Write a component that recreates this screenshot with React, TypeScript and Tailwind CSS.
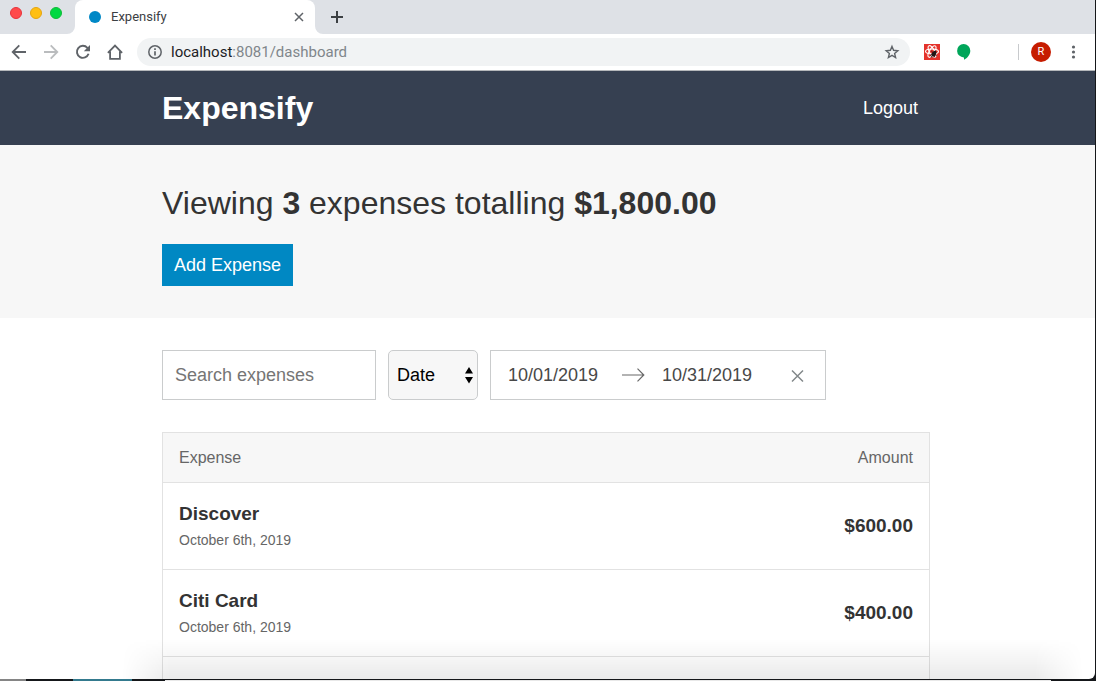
import React from "react";

const iconButton = "flex shrink-0 items-center justify-center text-[#5f6368]";

function TabStrip() {
  return (
    <div className="flex h-[34px] shrink-0 bg-[#dee1e6]">
      <div className="flex w-[75px] shrink-0 items-start gap-2 pl-[10px] pt-[7px]">
        <button aria-label="Close window" className="size-3 rounded-full border border-[#e8323a] bg-[#ff4a4b]" />
        <button aria-label="Minimize window" className="size-3 rounded-full border border-[#e5a50f] bg-[#ffbf12]" />
        <button aria-label="Zoom window" className="size-3 rounded-full border border-[#10bb38] bg-[#00d941]" />
      </div>
      <div className="relative flex w-60 shrink-0 items-center rounded-t-lg bg-white pl-[14px] pr-[10px]">
        <svg className="absolute -left-2 bottom-0" width="8" height="8" aria-hidden="true">
          <path d="M8 0V8H0A8 8 0 0 0 8 0Z" fill="#fff" />
        </svg>
        <svg className="absolute -right-2 bottom-0" width="8" height="8" aria-hidden="true">
          <path d="M0 0V8H8A8 8 0 0 1 0 0Z" fill="#fff" />
        </svg>
        <span className="size-3 rounded-full bg-[#0088c6]" />
        <span className="ml-[10px] flex-1 text-[13px] text-[#3c4043]">Expensify</span>
        <button aria-label="Close tab" className={iconButton}>
          <svg width="12" height="12" viewBox="0 0 12 12" stroke="currentColor" strokeWidth="1.5">
            <path d="M2 2l8 8M10 2l-8 8" />
          </svg>
        </button>
      </div>
      <button aria-label="New tab" className="ml-4 flex items-center text-[#3c4043]">
        <svg width="12" height="12" viewBox="0 0 12 12" stroke="currentColor" strokeWidth="2">
          <path d="M6 0v12M0 6h12" />
        </svg>
      </button>
    </div>
  );
}

function Toolbar() {
  return (
    <div className="flex h-[37px] shrink-0 items-center border-b border-[#b5b8bb] bg-white">
      <div className="flex w-[137px] shrink-0 items-center gap-4 pl-[11px]">
        <button aria-label="Back" className={iconButton}>
          <svg width="16" height="16" viewBox="0 0 16 16" fill="none" stroke="currentColor" strokeWidth="1.8">
            <path d="M15 8H2M8.3 1.4L1.7 8l6.6 6.6" />
          </svg>
        </button>
        <button aria-label="Forward" className="flex shrink-0 text-[#babcbe]">
          <svg width="16" height="16" viewBox="0 0 16 16" fill="none" stroke="currentColor" strokeWidth="1.8">
            <path d="M1 8h13M7.7 1.4L14.3 8l-6.6 6.6" />
          </svg>
        </button>
        <button aria-label="Reload" className={iconButton}>
          <svg width="16" height="16" viewBox="0 0 16 16" fill="none" stroke="currentColor" strokeWidth="1.9">
            <path d="M13.6 9.8A6 6 0 1 1 12.4 3.8L13.6 5" />
            <path d="M15 1v6.2H8.8z" fill="currentColor" stroke="none" />
          </svg>
        </button>
        <button aria-label="Home" className={iconButton}>
          <svg width="16" height="16" viewBox="0 0 16 16" fill="none" stroke="currentColor" strokeWidth="1.8">
            <path d="M.9 8.8L8 1.5l7.1 7.3M3.1 7.5v7.3h9.8V7.5" />
          </svg>
        </button>
      </div>
      <div className="flex h-7 min-w-0 flex-1 items-center rounded-full bg-[#f1f3f4] pl-[10px] pr-[10px]">
        <svg className="shrink-0" width="16" height="16" viewBox="0 0 16 16" fill="none" stroke="#5f6368" strokeWidth="1.5" aria-hidden="true">
          <circle cx="8" cy="8" r="6.2" />
          <path d="M8 7.2v4.2M8 4.3v1.6" strokeWidth="1.7" />
        </svg>
        <div className="ml-2 flex-1 text-[15px] leading-5 text-[#80868b]">
          <span className="text-[#202124]">localhost</span>:8081/dashboard
        </div>
        <button aria-label="Bookmark this page" className={iconButton}>
          <svg width="16" height="16" viewBox="0 0 16 16" fill="none" stroke="currentColor" strokeWidth="1.4">
            <path d="M8 2.4l1.6 3.9 4.2.4-3.200 2.700 1 4.100L8 11.300l-3.600 2.200 1-4.100-3.200-2.700 4.200-.4z" />
          </svg>
        </button>
      </div>
      <div className="flex shrink-0 items-center pl-[14px] pr-[14px]">
        <button aria-label="React developer tools">
          <svg className="block" width="16" height="16" viewBox="0 0 16 16">
            <path d="M0 0h16v16H0z" fill="#e4322b" />
            <g fill="none" stroke="#fff" strokeWidth="1.1">
              <ellipse cx="8" cy="7.5" rx="6.5" ry="2.5" />
              <ellipse cx="8" cy="7.5" rx="6.5" ry="2.5" transform="rotate(60 8 7.5)" />
              <ellipse cx="8" cy="7.5" rx="6.5" ry="2.5" transform="rotate(120 8 7.5)" />
            </g>
            <ellipse cx="10" cy="9.6" rx="1.9" ry="3.2" fill="#1d1515" transform="rotate(35 10 9.6)" />
            <path d="M7.300 7l5.500 5M6 11.500l6-5M7 13.500l2-3M10 13.500l1-3" stroke="#1d1515" strokeWidth="0.9" />
          </svg>
        </button>
        <button aria-label="Hangouts" className="ml-4">
          <svg className="block" width="16" height="16" viewBox="0 0 16 16">
            <path d="M7.600 0A6.700 6.700 0 0 1 14.300 6.700c0 3.900-2.900 7.300-6.300 9.100v-2.400A6.700 6.700 0 1 1 7.600 0Z" fill="#00a65a" />
          </svg>
        </button>
        <span className="ml-[46px] h-4 w-px bg-[#c8cacd]" />
        <button aria-label="Profile" className="ml-3 flex size-5 items-center justify-center rounded-full bg-[#c61c00] text-[11px] text-white">
          R
        </button>
        <button aria-label="Browser menu" className="ml-[14px] text-[#5f6368]">
          <svg className="block" width="16" height="16" viewBox="0 0 16 16" fill="currentColor">
            <circle cx="8.500" cy="3" r="1.6" />
            <circle cx="8.500" cy="8" r="1.6" />
            <circle cx="8.500" cy="13" r="1.6" />
          </svg>
        </button>
      </div>
    </div>
  );
}

const container = "mx-auto w-full max-w-[768px]";

const expenses = [
  { name: "Discover", date: "October 6th, 2019", amount: "$600.00" },
  { name: "Citi Card", date: "October 6th, 2019", amount: "$400.00" },
];

function Filters() {
  return (
    <div className="flex h-[50px] gap-3">
      <input
        type="text"
        aria-label="Search expenses"
        placeholder="Search expenses"
        className="w-[214px] border border-[#cacccd] bg-white px-3 text-lg text-[#333] outline-none placeholder:text-[#757575]"
      />
      <div className="relative">
        <select
          aria-label="Sort by"
          className="h-full w-[90px] appearance-none rounded-[5px] border border-[#cacccd] bg-[#f7f7f7] pl-2 text-lg text-black"
        >
          <option>Date</option>
          <option>Amount</option>
        </select>
        <svg className="pointer-events-none absolute right-1 top-[17px]" width="10" height="17" viewBox="0 0 10 17" aria-hidden="true">
          <path d="M5 0l4 6.5H1zM5 16.5L1 10h8z" />
        </svg>
      </div>
      <div className="flex w-[336px] items-center border border-[#cacccd] bg-white pl-[17px] pr-5 text-lg text-[#484848]">
        <input aria-label="Start date" defaultValue="10/01/2019" className="w-[114px] outline-none" />
        <svg className="shrink-0" width="24" height="16" viewBox="0 0 24 16" fill="none" stroke="#686868" strokeWidth="1.2" aria-hidden="true">
          <path d="M0 8h22M15.500 1.700L21.800 8l-6.300 6.300" />
        </svg>
        <input aria-label="End date" defaultValue="10/31/2019" className="ml-4 min-w-0 flex-1 outline-none" />
        <button aria-label="Clear dates" className="text-[#82888a]">
          <svg className="block" width="16" height="16" viewBox="0 0 16 16" stroke="currentColor" strokeWidth="1.5">
            <path d="M3 3.500l11 11M14 3.500l-11 11" />
          </svg>
        </button>
      </div>
    </div>
  );
}

function ExpenseTable() {
  return (
    <table className="mt-8 w-full border-collapse border border-[#e2e2e2] text-[#333]">
      <thead>
        <tr className="h-[50px] border-b border-[#e2e2e2] bg-[#f7f7f7] text-base text-[#666]">
          <th className="px-4 text-left font-normal">Expense</th>
          <th className="px-4 text-right font-normal">Amount</th>
        </tr>
      </thead>
      <tbody>
        {expenses.map((e) => (
          <tr key={e.name} className="h-[87px] border-b border-[#e2e2e2]">
            <td className="px-4">
              <h3 className="text-[19px] font-bold leading-7">{e.name}</h3>
              <span className="block text-sm leading-6 text-[#666]">{e.date}</span>
            </td>
            <td className="px-4 text-right text-[19px] font-bold">{e.amount}</td>
          </tr>
        ))}
        <tr className="h-[87px]">
          <td />
          <td />
        </tr>
      </tbody>
    </table>
  );
}

export default function App() {
  return (
    <div className="flex h-screen flex-col overflow-hidden bg-[#15171a] pr-px font-['Roboto',sans-serif]">
      <div className="relative flex min-h-0 flex-1 flex-col overflow-hidden rounded-br-md bg-white">
        <TabStrip />
        <Toolbar />
        <div className="min-h-0 flex-1 overflow-hidden font-['Liberation_Sans',Arial,sans-serif]">
          <header className="bg-[#364051] pr-[3px]">
            <div className={`${container} flex h-[74px] items-center justify-between text-white`}>
              <a href="#dashboard" className="text-[32px] font-bold">
                Expensify
              </a>
              <button className="px-3 text-lg">Logout</button>
            </div>
          </header>
          <section className="bg-[#f7f7f7] pb-8 pr-[3px] pt-9">
            <div className={container}>
              <h1 className="text-[32px] leading-[44px] text-[#333]">
                Viewing <strong>3</strong> expenses totalling <strong>$1,800.00</strong>
              </h1>
              <a href="#create" className="mt-[19px] inline-flex h-[42px] items-center bg-[#0088c3] px-3 text-lg text-white">
                Add Expense
              </a>
            </div>
          </section>
          <main className="pr-[3px] pt-8">
            <div className={container}>
              <Filters />
              <ExpenseTable />
            </div>
          </main>
        </div>
        <div className="pointer-events-none absolute bottom-0 left-[122px] right-3 h-10 bg-linear-to-t from-black/8 to-transparent mask-x-from-95%" />
      </div>
      <div className="flex h-0.5 shrink-0 items-end">
        <span className="h-full w-[26px] bg-[#858585]" />
        <span className="ml-[47px] h-full w-[59px] bg-[#347a8e]" />
        <span className="ml-[33px] mr-11 h-px flex-1 bg-[#e8e8e8]" />
      </div>
    </div>
  );
}
